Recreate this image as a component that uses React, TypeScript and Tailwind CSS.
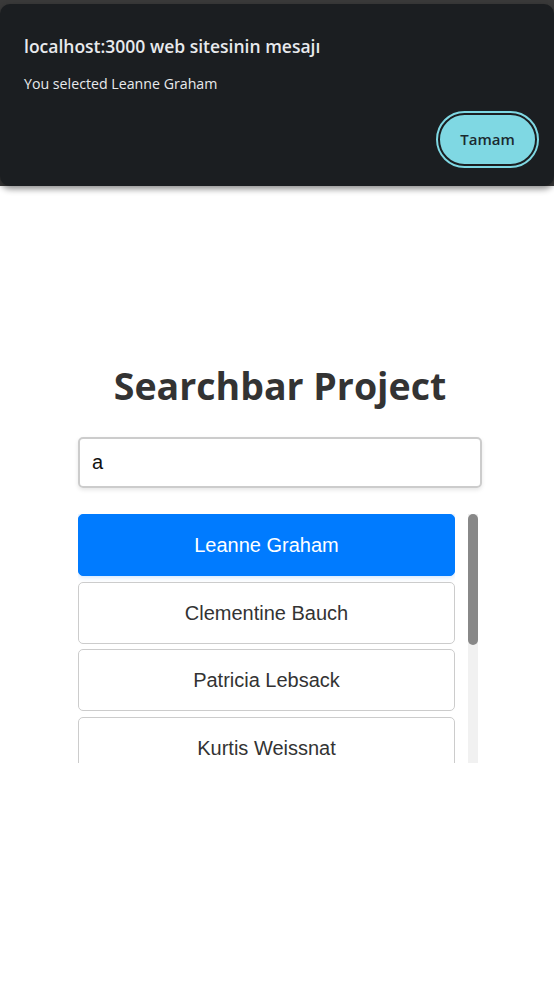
import React, { useState } from 'react';

const users = [
  'Leanne Graham',
  'Clementine Bauch',
  'Patricia Lebsack',
  'Kurtis Weissnat',
  'Nicholas Runolfsdottir V',
  'Glenna Reichert',
  'Clementina DuBuque',
];

const App: React.FC = () => {
  const [query, setQuery] = useState('a');
  const [selected, setSelected] = useState('Leanne Graham');

  const results = users.filter((u) => u.toLowerCase().includes(query.toLowerCase()));

  return (
    <div className="relative min-h-[981px] bg-white">
      {/* Alert dialog */}
      <div className="absolute inset-x-0 top-0 z-10 bg-[#3a3a3a] pt-[4px]">
        <div
          className="rounded-[10px] bg-[#1b1e21] pl-[24px] pr-[15px] pt-[30px] pb-[20px] shadow-[0_3px_6px_rgba(0,0,0,0.45)]"
          style={{ fontFamily: '"Open Sans", "Noto Sans", sans-serif' }}
        >
          <h2 className="text-[17.5px] font-semibold leading-[24px] text-[#e8eaed]">
            localhost:3000 web sitesinin mesajı
          </h2>
          <p className="mt-[16px] text-[14.2px] leading-[20px] text-[#e8eaed]">
            You selected {selected}
          </p>
          <div className="mt-[19px] flex justify-end">
            <button className="mr-[2px] h-[53px] w-[99px] rounded-full border-[2px] border-[#1b1e21] bg-[#7fd8e3] text-[15px] font-semibold text-[#1b2a30] outline-[2px] outline-[#7fd8e3] outline-solid">
              Tamam
            </button>
          </div>
        </div>
      </div>

      {/* Page */}
      <div className="flex flex-col items-center pt-[362px] pl-[6px]">
        <h1
          className="text-[37.5px] font-bold leading-[48px] text-[#333333]"
          style={{ fontFamily: '"Open Sans", "Noto Sans", sans-serif' }}
        >
          Searchbar Project
        </h1>
        <div className="mt-[27px] w-[404px]" style={{ fontFamily: '"Liberation Sans", Arial, sans-serif' }}>
          <input
            value={query}
            onChange={(e) => setQuery(e.target.value)}
            className="h-[51px] w-full rounded-[5px] border-[2px] border-[#cccccc] px-[12px] text-[20px] text-[#111] shadow-[0_2px_4px_rgba(0,0,0,0.1)] outline-none"
          />
          <div className="mt-[26px] flex h-[249px] w-[400px] gap-[13px]">
            <ul className="flex h-full w-[377px] flex-col gap-[5.5px] overflow-hidden">
              {results.map((name) => (
                <li
                  key={name}
                  onClick={() => {
                    setSelected(name);
                    alert(`You selected ${name}`);
                  }}
                  className={
                    name === selected
                      ? 'flex h-[62px] shrink-0 cursor-pointer items-center justify-center rounded-[5px] border border-[#007bff] bg-[#007bff] text-[20px] text-white shadow-[0_0_6px_rgba(0,123,255,0.3)]'
                      : 'flex h-[62px] shrink-0 cursor-pointer items-center justify-center rounded-[5px] border border-[#cccccc] bg-white text-[20px] text-[#333333]'
                  }
                >
                  {name}
                </li>
              ))}
            </ul>
            {/* scrollbar */}
            <div className="h-full w-[10px] bg-[#f1f1f1]">
              <div className="h-[131px] w-full rounded-[5px] bg-[#888888]" />
            </div>
          </div>
        </div>
      </div>
    </div>
  );
};

export default App;
